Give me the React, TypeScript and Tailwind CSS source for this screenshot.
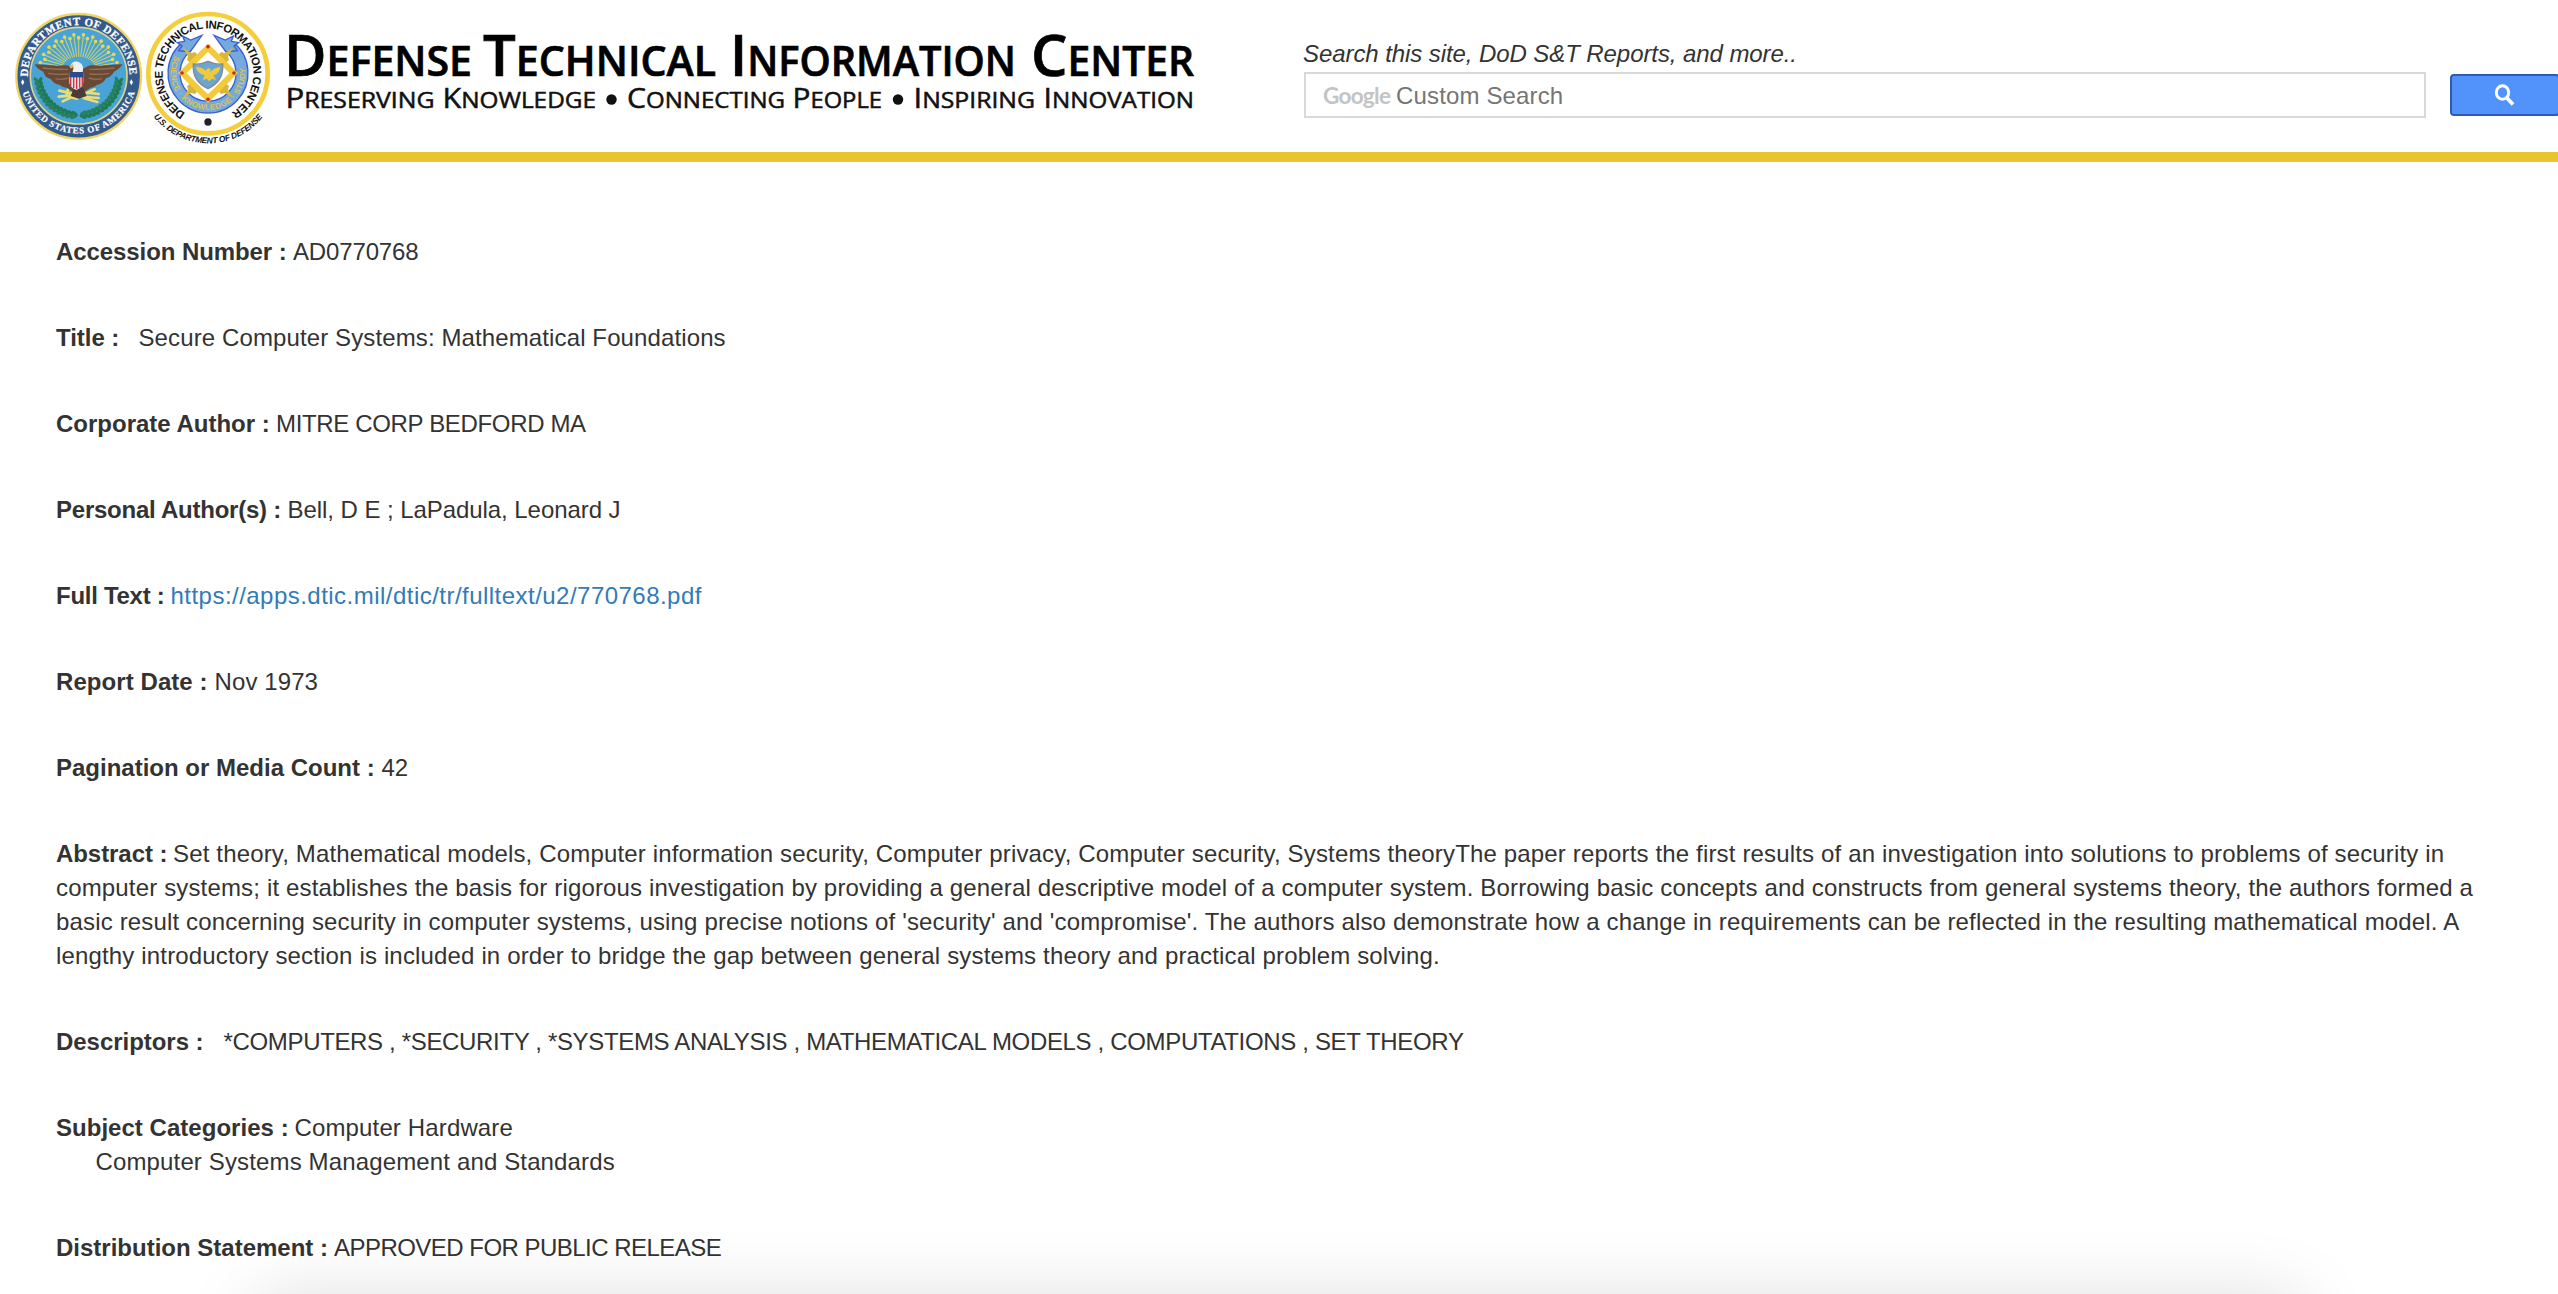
import type { ReactNode } from "react";

const toRad = (deg: number) => (deg * Math.PI) / 180;

const RAYS = Array.from({ length: 25 }, (_, i) => 186 + i * 7);
const LEAVES = Array.from({ length: 13 }, (_, i) => 96 + i * 6.3);

function DefenseSeal() {
  return (
    <g>
      <circle cx="236" cy="229" r="187" fill="#34598c" stroke="#f0d562" strokeWidth="7" />
      <circle cx="236" cy="227" r="145" fill="#4aa3d6" stroke="#d9d68a" strokeWidth="5" />

      {/* sunburst */}
      {RAYS.map((a, i) => {
        const r = i % 2 ? 120 : 110;
        const c = Math.cos(toRad(a));
        const s = Math.sin(toRad(a));
        return (
          <g key={a}>
            <line x1={236 + c * 50} y1={208 + s * 38} x2={236 + c * r} y2={212 + s * r * 0.9} stroke="#c9cf70" strokeWidth="3.2" />
            <circle cx={236 + c * (r - 2)} cy={212 + s * r * 0.9} r="5.5" fill="#e6d84c" />
          </g>
        );
      })}

      {/* laurel */}
      {LEAVES.map((a) =>
        [1, -1].map((side) => {
          const x = 236 + side * Math.sin(toRad(a)) * 122;
          const y = 224 - Math.cos(toRad(a)) * 122;
          return (
            <g key={`${a}${side}`} transform={`translate(${x} ${y}) rotate(${side * (a - 90)})`}>
              <ellipse cx="-7" cy="0" rx="5" ry="11" fill="#27805f" transform="rotate(-32)" />
              <ellipse cx="7" cy="2" rx="5" ry="11" fill="#1f7a55" transform="rotate(32)" />
            </g>
          );
        }),
      )}

      {/* arrows and branch */}
      <g stroke="#e9dc7a" strokeWidth="8" strokeLinecap="round" fill="none">
        <path d="M178 272l36 8 24 10M176 290l44-4M188 304l38-18M206 262l-6 20" />
        <path d="M248 284l36-16M246 290l50 4M250 294l42 12M262 278l34 4M216 292l16 4" />
      </g>

      {/* eagle */}
      <path
        d="M104 193c24 0 46 4 66 4 16-1 32-4 44 4l22 14 22-14c12-8 28-5 44-4 20 0 42-4 66-4-8 12-16 17-26 22-6 12-14 16-24 20-6 12-16 18-28 20-6 6-12 8-18 8l-18 12h-36l-18-12c-6 0-14-2-20-8-12-2-22-8-28-18-10-4-18-8-22-22-12-5-20-10-26-22z"
        fill="#6b4937"
      />
      <path
        d="M128 204c26 4 48 4 76 4M144 220c20 4 40 4 60 2M166 236c14 4 26 2 40-2M344 204c-26 4-48 4-76 4M328 220c-20 4-40 4-60 2M306 236c-14 4-26 2-40-2"
        stroke="#93704f"
        strokeWidth="4"
        fill="none"
      />
      <path d="M222 264l-10 24 24 8 24-8-10-24z" fill="#4b3b35" />
      <path d="M212 198c2-14 18-18 30-8 8 6 8 18 6 28h-30c0-8 2-12 4-16z" fill="#eef1f4" />
      <path d="M220 192l-12 6 4 8 8-6z" fill="#dcb64c" />
      <path d="M208 218h42v28c0 12-12 20-21 24-9-4-21-12-21-24z" fill="#f4eef0" />
      <path d="M212 230v28M221 230v34M230 230v38M239 230v33M247 230v27" stroke="#c53a48" strokeWidth="4.5" />
      <path d="M208 216h42v16h-42z" fill="#2c4a8c" />

      <path id="dodTop" d="M84 240A152.5 152.5 0 1 1 388 240" fill="none" />
      <path id="dodBottom" d="M64 262A176 176 0 0 0 408 262" fill="none" />
      <text fill="#fff" stroke="#fff" strokeWidth="0.8" className="font-['Liberation_Serif'] text-[33px] font-bold">
        <textPath href="#dodTop" startOffset="10" textLength="478" lengthAdjust="spacing">
          DEPARTMENT OF DEFENSE
        </textPath>
      </text>
      <text fill="#fff" stroke="#fff" strokeWidth="0.6" className="font-['Liberation_Serif'] text-[27px] font-bold">
        <textPath href="#dodBottom" startOffset="16" textLength="446" lengthAdjust="spacing">
          UNITED STATES OF AMERICA
        </textPath>
      </text>
      <path d="M68 238l5 9-5 9-5-9zM394 238l5 9-5 9-5-9z" fill="#fff" />
    </g>
  );
}

function CenterSeal() {
  return (
    <g>
      <circle cx="624" cy="221" r="179" fill="#fff" stroke="#f4cf3b" strokeWidth="14" />

      {/* ribbon */}
      <path d="M560 140A102 102 0 1 0 688 140" fill="none" stroke="#3a5fd0" strokeWidth="40" />
      <path d="M560 140A102 102 0 1 0 688 140" fill="none" stroke="#76a9dc" strokeWidth="32" />
      <path
        d="M606 106l-34 14-24-12 6 16-22 4 14 10-10 14 34 4zM642 106l34 14 24-12-6 16 22 4-14 10 10 14-34 4z"
        fill="#76a9dc"
        stroke="#3a5fd0"
        strokeWidth="4"
      />
      <path id="ribbonText" d="M528 160A112 112 0 1 0 720 160" fill="none" />
      <text fill="#d9c455" className="font-['Liberation_Sans'] text-[24px] font-bold">
        <textPath href="#ribbonText" startOffset="8" textLength="418" lengthAdjust="spacing">
          SCIENCE · KNOWLEDGE · STUDY
        </textPath>
      </text>

      {/* diamond frame */}
      <g fill="#d8b63c">
        {[45, 135, 225, 315].map((a) => (
          <path key={a} transform={`translate(624 219) rotate(${a})`} d="M-15 -52L-17 -72L-7 -78L0 -108L7 -78L17 -72L15 -52z" />
        ))}
      </g>
      <path d="M624 143L701 219L624 296L547 219z" fill="#fff" stroke="#f3ca3a" strokeWidth="18" />
      <g fill="#c8281f">
        <circle cx="624" cy="140" r="5.5" />
        <circle cx="702" cy="219" r="5.5" />
        <circle cx="624" cy="298" r="5.5" />
        <circle cx="546" cy="219" r="5.5" />
      </g>

      {/* shield */}
      <path d="M580 192c16 2 30-2 44-8 14 6 28 10 44 8 3 34-14 60-44 74-30-14-47-40-44-74z" fill="#6aa6d2" stroke="#85888c" strokeWidth="4" />
      <path d="M588 200l18 4 12 8c0-8 10-10 14-4l-2 8 12-10 18-6c0 14-8 22-20 26l8 14-12-4-8 8-8-8-12 4 6-14c-14-4-24-12-26-26z" fill="#f0c93c" />

      <path id="dticArc" d="M558 340A136 136 0 1 1 690 340" fill="none" />
      <text fill="#111" className="font-['Liberation_Sans'] text-[34px] font-bold">
        <textPath href="#dticArc" startOffset="2" textLength="710" lengthAdjust="spacing">
          DEFENSE TECHNICAL INFORMATION CENTER
        </textPath>
      </text>
      <circle cx="624" cy="366" r="11" fill="#222" />

      <path id="dticOuter" d="M461 350A208 208 0 0 0 789 350" fill="none" />
      <text fill="#111" className="font-['Liberation_Sans'] text-[25px] font-bold italic">
        <textPath href="#dticOuter" textLength="376" lengthAdjust="spacing">
          U.S. DEPARTMENT OF DEFENSE
        </textPath>
      </text>
    </g>
  );
}

type Word = { text: string; x: number; width: number };

const TITLE: Word[] = [
  { text: "Defense", x: 284, width: 188 },
  { text: "Technical", x: 483, width: 233 },
  { text: "Information", x: 730, width: 286 },
  { text: "Center", x: 1031, width: 163 },
];

const TAGLINE: Word[] = [
  { text: "Preserving", x: 285.5, width: 149 },
  { text: "Knowledge", x: 442.5, width: 153.5 },
  { text: "Connecting", x: 627, width: 158 },
  { text: "People", x: 792.5, width: 89.5 },
  { text: "Inspiring", x: 913.5, width: 121.5 },
  { text: "Innovation", x: 1043.5, width: 150.5 },
];

function Wordmark() {
  return (
    <svg className="h-[152px] w-[930px] shrink-0" viewBox="280 0 930 152" role="img" aria-label="Defense Technical Information Center">
      <g className="font-['Open_Sans',sans-serif]">
        {TITLE.map((w) => (
          <text key={w.text} x={w.x} y="75.7" textLength={w.width} lengthAdjust="spacingAndGlyphs" fill="#000" stroke="#000" strokeWidth="0.7" className="text-[58px] font-semibold">
            {w.text[0]}
            <tspan className="text-[41px]">{w.text.slice(1).toUpperCase()}</tspan>
          </text>
        ))}
        {TAGLINE.map((w) => (
          <text key={w.text} x={w.x} y="108.3" textLength={w.width} lengthAdjust="spacingAndGlyphs" fill="#111" stroke="#111" strokeWidth="0.5" className="text-[27px]">
            {w.text[0]}
            <tspan className="text-[21.5px]">{w.text.slice(1).toUpperCase()}</tspan>
          </text>
        ))}
      </g>
      <circle cx="611.5" cy="99.5" r="5.2" fill="#111" />
      <circle cx="898" cy="99.5" r="5.2" fill="#111" />
    </svg>
  );
}

function Header() {
  return (
    <header className="flex h-[162px] items-start overflow-hidden border-b-10 border-[#e8c52c]">
      <svg className="h-[152px] w-[280px] shrink-0" viewBox="0 0 840 456">
        <DefenseSeal />
        <CenterSeal />
      </svg>
      <Wordmark />
      <div className="ml-[93px] flex shrink-0 flex-col pt-[37px]">
        <label className="h-[35px] text-[24px] leading-[34px] tracking-[-0.08px] italic">Search this site, DoD S&amp;T Reports, and more..</label>
        <div className="ml-px flex items-center">
          <div className="flex h-[46px] w-[1122px] items-center border-2 border-[#d9d9d9] bg-white pl-[17px]">
            <span className="w-[73px] pt-0.5 font-['Lato'] text-[22.5px] leading-[30px] font-bold tracking-[-0.7px] text-[#c4c4c4]">Google</span>
            <span className="pt-px text-[24px] leading-[34px] tracking-[0.15px] text-[#757575]">Custom Search</span>
          </div>
          <button className="ml-6 flex h-[42px] w-[110px] items-center justify-center rounded-[4px] border-2 border-[#2f5bb7] bg-[#5292fb]">
            <svg className="size-[22px]" viewBox="0 0 22 22" fill="none" stroke="#fff">
              <ellipse cx="8.5" cy="8.5" rx="6.2" ry="6.8" strokeWidth="3" />
              <path d="M13 14L19 20.5" strokeWidth="3.6" />
            </svg>
          </button>
        </div>
      </div>
    </header>
  );
}

function Field({ label, labelClass, children }: { label: string; labelClass: string; children: ReactNode }) {
  return (
    <p className="whitespace-nowrap">
      <strong className={`inline-block ${labelClass}`}>{label}</strong>
      {children}
    </p>
  );
}

export default function App() {
  return (
    <div className="relative h-[1294px] w-full overflow-hidden bg-white font-['Liberation_Sans',Arial,sans-serif] text-[#333]">
      <Header />
      <main className="flex flex-col gap-[52px] px-14 pt-[73px] text-[24px] leading-[34px]">
        <Field label="Accession Number :" labelClass="w-[237px] tracking-[-0.08px]">
          <span className="tracking-[-0.15px]">AD0770768</span>
        </Field>
        <Field label="Title :" labelClass="w-[82.5px] tracking-[-0.04px]">
          <span className="tracking-[0.115px]">Secure Computer Systems: Mathematical Foundations</span>
        </Field>
        <Field label="Corporate Author :" labelClass="w-[220px]">
          <span className="tracking-[-0.34px]">MITRE CORP BEDFORD MA</span>
        </Field>
        <Field label="Personal Author(s) :" labelClass="w-[231.5px] tracking-[-0.24px]">
          <span className="tracking-[-0.06px]">Bell, D E ; LaPadula, Leonard J</span>
        </Field>
        <Field label="Full Text :" labelClass="w-[114.5px] tracking-[-0.28px]">
          <a className="tracking-[0.47px] text-[#337ab7]">https://apps.dtic.mil/dtic/tr/fulltext/u2/770768.pdf</a>
        </Field>
        <Field label="Report Date :" labelClass="w-[158.5px] tracking-[0.07px]">
          <span className="tracking-[0.1px]">Nov 1973</span>
        </Field>
        <Field label="Pagination or Media Count :" labelClass="w-[325.5px]">42</Field>
        <Field label="Abstract :" labelClass="w-[117px] tracking-[-0.06px]">
          <span className="tracking-[0.158px]">
            Set theory, Mathematical models, Computer information security, Computer privacy, Computer security, Systems theoryThe paper reports the first results of an investigation into solutions to problems of security in
            <br />
            computer systems; it establishes the basis for rigorous investigation by providing a general descriptive model of a computer system. Borrowing basic concepts and constructs from general systems theory, the authors formed a
            <br />
            basic result concerning security in computer systems, using precise notions of 'security' and 'compromise'. The authors also demonstrate how a change in requirements can be reflected in the resulting mathematical model. A
            <br />
            lengthy introductory section is included in order to bridge the gap between general systems theory and practical problem solving.
          </span>
        </Field>
        <Field label="Descriptors :" labelClass="w-[167.5px] tracking-[-0.04px]">
          <span className="tracking-[-0.34px]">*COMPUTERS , *SECURITY , *SYSTEMS ANALYSIS , MATHEMATICAL MODELS , COMPUTATIONS , SET THEORY</span>
        </Field>
        <Field label="Subject Categories :" labelClass="w-[238.5px] tracking-[0.03px]">
          <span className="tracking-[0.14px]">
            Computer Hardware
            <br />
            <span className="ml-[39.5px]">Computer Systems Management and Standards</span>
          </span>
        </Field>
        <Field label="Distribution Statement :" labelClass="w-[278px]">
          <span className="tracking-[-0.53px]">APPROVED FOR PUBLIC RELEASE</span>
        </Field>
      </main>
      {/* shadow cast by the window below the fold */}
      <div className="pointer-events-none absolute top-[1300px] right-[258px] left-[258px] h-[200px] shadow-[0_0_72px_rgba(0,0,0,0.15)]" />
    </div>
  );
}
